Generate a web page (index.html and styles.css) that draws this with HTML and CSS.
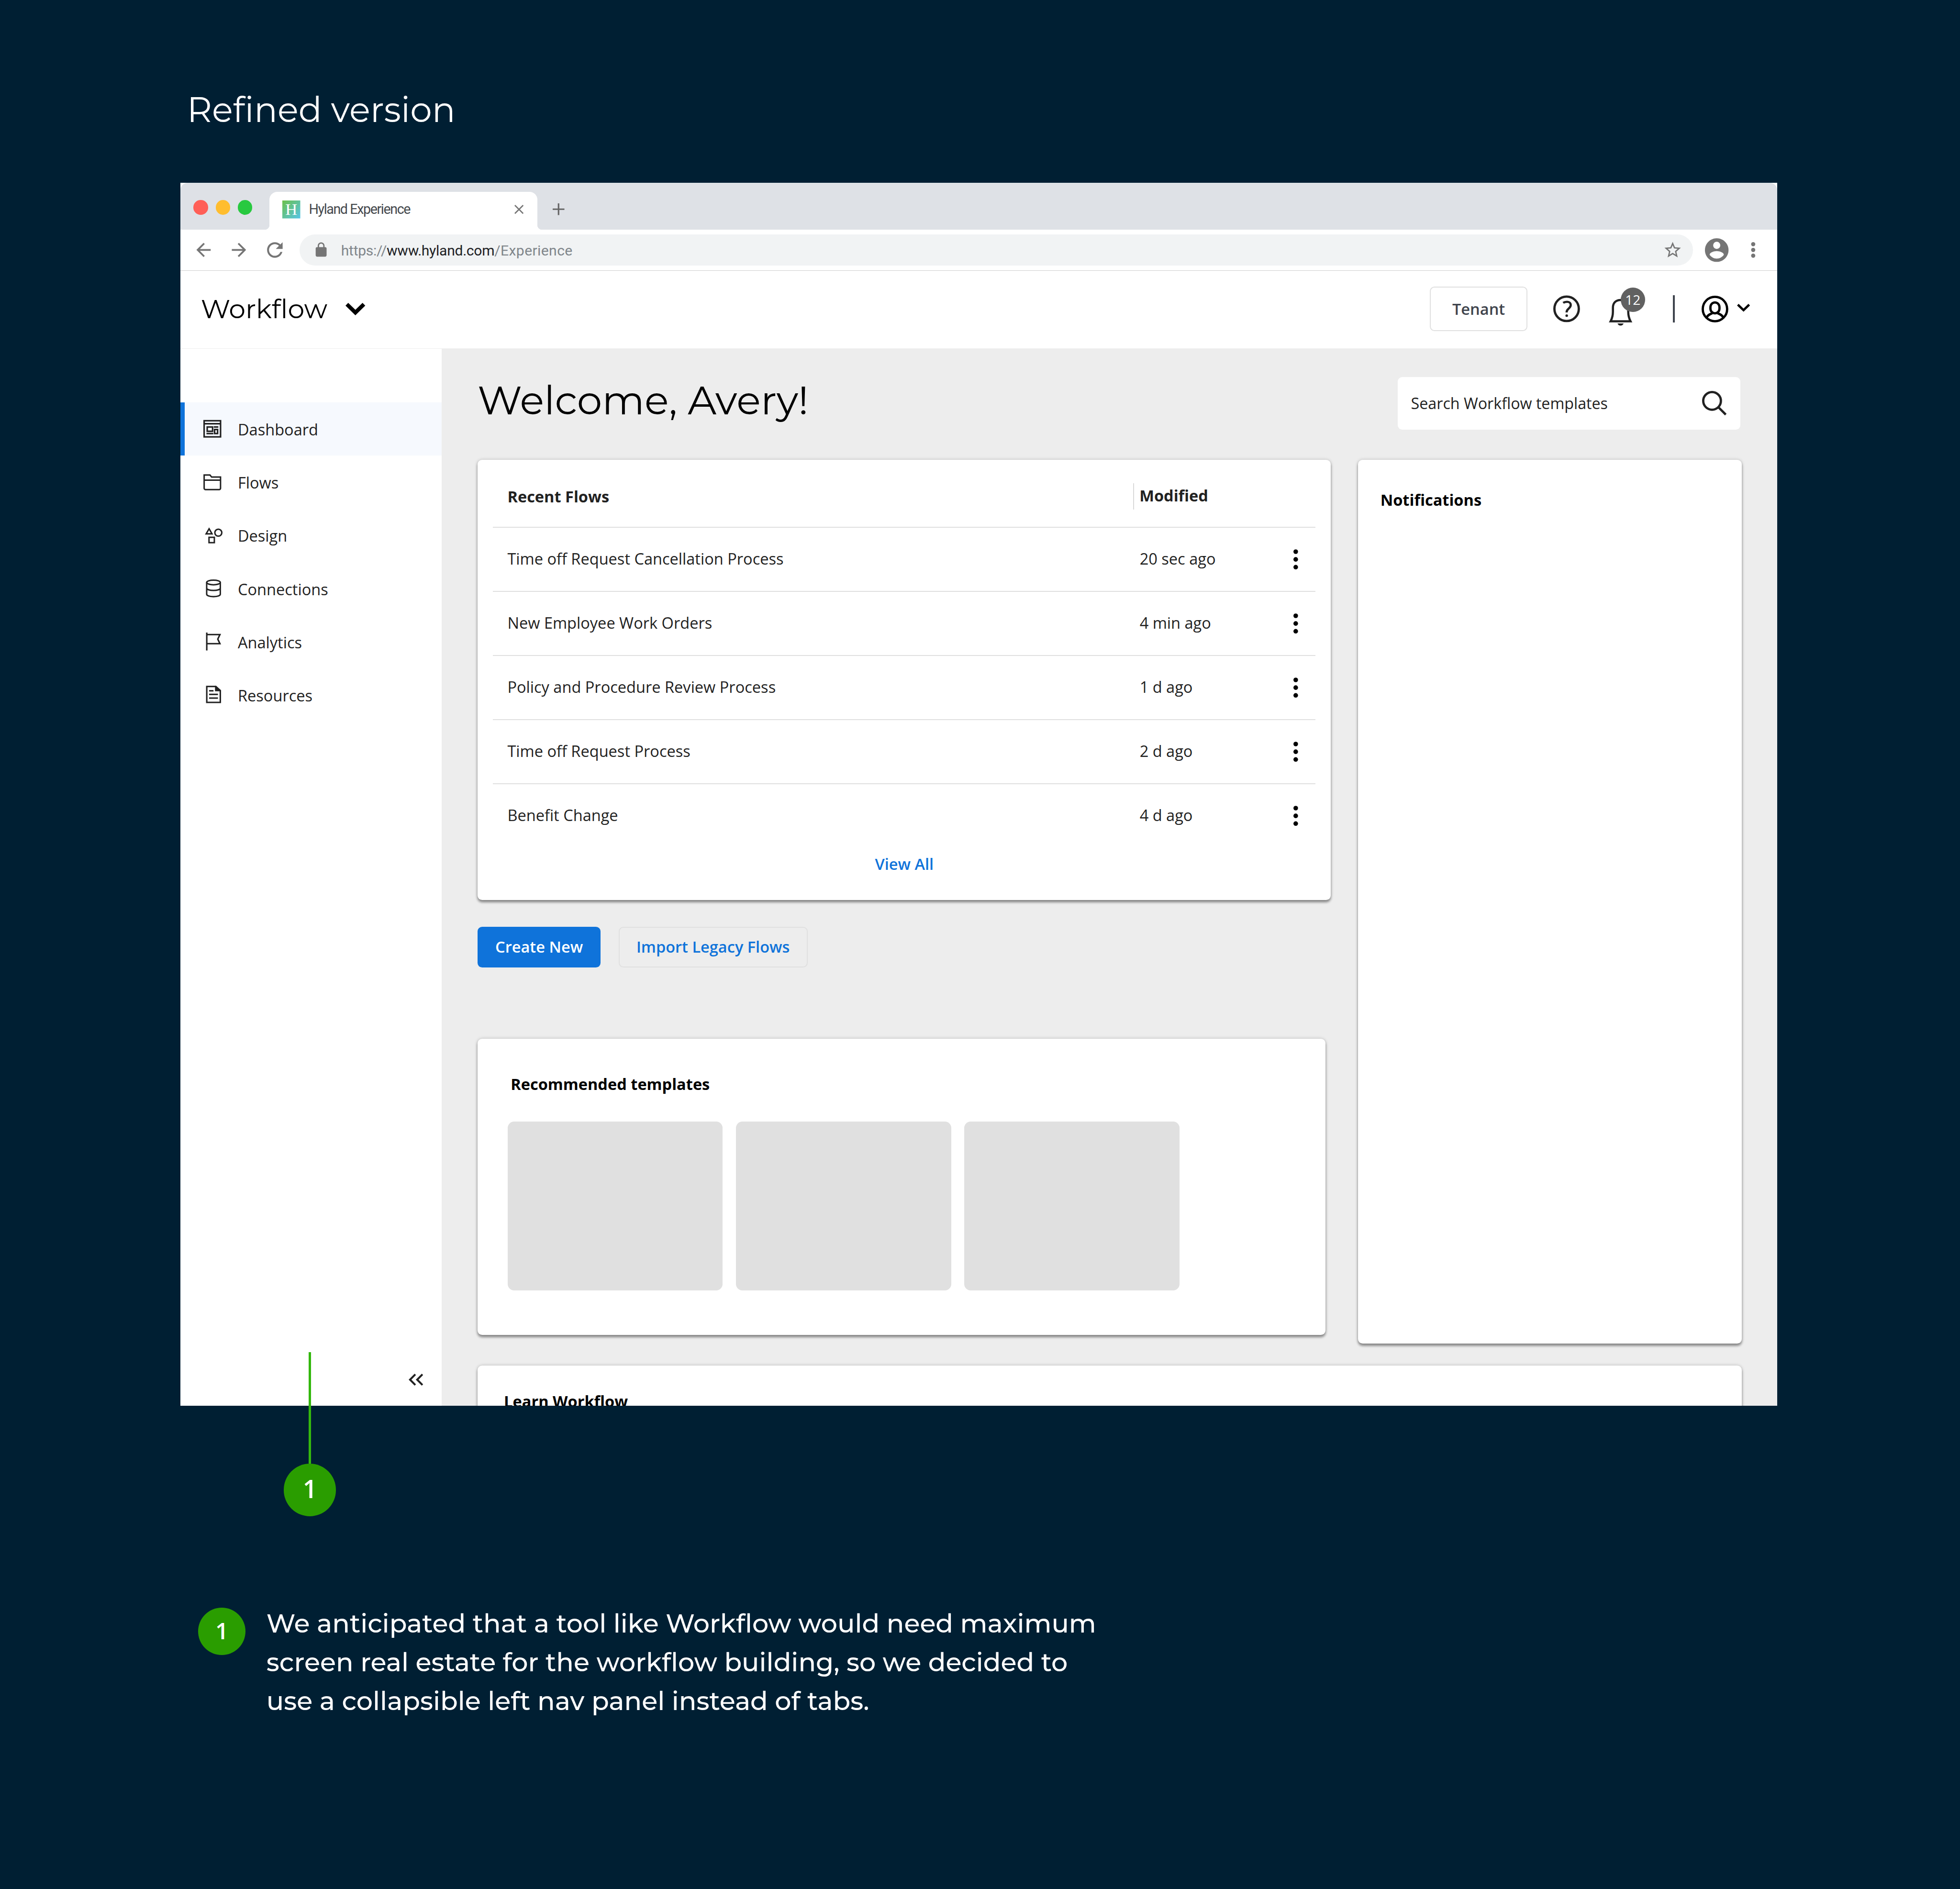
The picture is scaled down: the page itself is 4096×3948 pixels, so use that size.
FILE: index.html
```html
<!DOCTYPE html>
<html lang="en">
<head>
<meta charset="utf-8">
<title>Workflow – refined version</title>
<link rel="stylesheet" href="styles.css">
</head>
<body>
<h1 class="page-title">Refined version</h1>

<div class="stage">
  <section class="browser">
    <div class="tabstrip">
      <div class="lights"><i class="red"></i><i class="amber"></i><i class="green"></i></div>
      <div class="tab">
        <svg class="favicon" viewBox="0 0 39 39"><defs><linearGradient id="fav" x1="0" y1="0" x2="1" y2="1"><stop offset="0" stop-color="#6cc04a"/><stop offset="1" stop-color="#55c5e8"/></linearGradient></defs><rect width="39" height="39" fill="url(#fav)"/><text x="19.5" y="31.6" class="favicon-letter">H</text></svg>
        <span class="tab-title">Hyland Experience</span>
        <svg class="tab-close" viewBox="0 0 20 20"><path d="M1 1 19 19M19 1 1 19" fill="none" stroke="#757575" stroke-width="2.7"/></svg>
      </div>
      <svg class="tab-new" viewBox="0 0 26 26"><path d="M13 0V26M0 13H26" fill="none" stroke="#666" stroke-width="3.4"/></svg>
    </div>

    <div class="toolbar">
      <svg class="nav-arrow" viewBox="0 0 24 24"><path d="M20 11H7.83l5.59-5.59L12 4l-8 8 8 8 1.41-1.41L7.83 13H20v-2z"/></svg>
      <svg class="nav-arrow forward" viewBox="0 0 24 24"><path d="M12 4l-1.41 1.41L16.17 11H4v2h12.17l-5.58 5.59L12 20l8-8z"/></svg>
      <svg class="nav-reload" viewBox="0 0 24 24"><path d="M17.65 6.35C16.2 4.9 14.21 4 12 4c-4.42 0-7.99 3.58-7.99 8s3.57 8 7.99 8c3.73 0 6.84-2.55 7.73-6h-2.08c-.82 2.33-3.04 4-5.65 4-3.31 0-6-2.69-6-6s2.69-6 6-6c1.66 0 3.14.69 4.22 1.78L13 11h7V4l-2.35 2.35z"/></svg>
      <div class="address">
        <svg class="lock" viewBox="0 0 24 24"><path d="M18 8h-1V6c0-2.76-2.24-5-5-5S7 3.240 7 6v2H6c-1.100 0-2 .9-2 2v10c0 1.100.9 2 2 2h12c1.100 0 2-.9 2-2V10c0-1.100-.9-2-2-2zM8.900 6c0-1.710 1.390-3.100 3.100-3.100s3.100 1.390 3.100 3.100v2H8.900V6z"/></svg>
        <span class="url">https://<b>www.hyland.com</b><span class="url-path">/Experience</span></span>
        <svg class="star" viewBox="0 0 24 24"><path d="M22 9.240l-7.190-.62L12 2 9.190 8.630 2 9.240l5.460 4.730L5.820 21 12 17.270 18.180 21l-1.630-7.030L22 9.240zM12 15.400l-3.760 2.270 1-4.280-3.320-2.880 4.380-.38L12 6.100l1.710 4.040 4.380.38-3.320 2.880 1 4.280L12 15.400z"/></svg>
      </div>
      <svg class="profile" viewBox="0 0 24 24"><path d="M12 2C6.480 2 2 6.480 2 12s4.480 10 10 10 10-4.480 10-10S17.520 2 12 2zm0 3c1.660 0 3 1.340 3 3s-1.340 3-3 3-3-1.340-3-3 1.340-3 3-3zm0 14.200c-2.500 0-4.710-1.280-6-3.220.03-1.990 4-3.080 6-3.080 1.990 0 5.970 1.090 6 3.080-1.290 1.940-3.500 3.220-6 3.220z"/></svg>
      <svg class="browser-menu" viewBox="0 0 10 34"><circle cx="5" cy="4.500" r="4.500"/><circle cx="5" cy="17" r="4.500"/><circle cx="5" cy="29.500" r="4.500"/></svg>
    </div>

    <header class="app-header">
      <span class="app-name">Workflow</span>
      <svg class="app-switch" viewBox="0 0 43 27"><path d="M3 3 21.500 21 40 3" fill="none" stroke="#000" stroke-width="8.500"/></svg>
      <button class="tenant">Tenant</button>
      <svg class="help" viewBox="0 0 58 58"><circle cx="29" cy="28.500" r="26.500" fill="none" stroke="#212121" stroke-width="5"/><path d="M21.500 15.500C24.500 13.500 27.500 13.200 30 13.200C35 13.200 38 16.300 38 20C38 23.500 36.500 25.200 33.500 28C30.500 30.700 29 32.200 29 36.500" fill="none" stroke="#212121" stroke-width="4.800"/><circle cx="29.200" cy="43.300" r="2.800" fill="#212121"/></svg>
      <div class="bell">
        <svg viewBox="0 0 51.300 60"><path d="M4 56.700H47.300C44.300 51 42.300 45 42.300 36V27C42.300 16.500 35.500 10.300 25.600 10.300S9 16.500 9 27V36C9 45 7 51 4 56.700Z" fill="none" stroke="#212121" stroke-width="4.700"/><path d="M19 61.300H32.200C31 64.500 28.500 66.100 25.600 66.100S20.200 64.500 19 61.300Z" fill="#212121"/></svg>
        <span class="badge">12</span>
      </div>
      <i class="divider"></i>
      <svg class="user" viewBox="0 0 58 58"><g fill="none" stroke="#000" stroke-width="5"><circle cx="29" cy="29" r="26.500"/><rect x="19.200" y="14.600" width="19.600" height="23.700" rx="9.800" ry="10.300"/><path d="M10.800 48.500C12 43 17.500 40.500 22.800 38.300C24 37.800 24.200 37 24.300 36"/><path d="M47.200 48.500C46 43 40.500 40.500 35.200 38.300C34 37.800 33.800 37 33.700 36"/></g></svg>
      <svg class="user-chevron" viewBox="0 0 28.300 23"><path d="M1.800 1.900 14.150 13.700 26.500 1.900" fill="none" stroke="#000" stroke-width="5"/></svg>
    </header>

    <div class="app-body">
      <nav class="sidebar">
        <a class="nav-item active"><svg viewBox="0 0 42 40"><g fill="none" stroke="#212121" stroke-width="3.300"><rect x="1.650" y="2.400" width="35.700" height="35.100"/><path d="M1.650 8.900H37.300M6.700 30.300H21.700M22.700 16H32.500"/><rect x="8.350" y="16" width="11.700" height="9.300"/><rect x="24.400" y="21.400" width="6.500" height="8.900"/></g></svg><span>Dashboard</span></a>
        <a class="nav-item"><svg viewBox="0 0 42 40"><path d="M1.700 3.900H14.300L18 8.400H37.300V32.700a3 3 0 0 1-3 3H4.700a3 3 0 0 1-3-3ZM1.700 15H37.300" fill="none" stroke="#212121" stroke-width="3.100"/></svg><span>Flows</span></a>
        <a class="nav-item"><svg viewBox="0 0 42 40"><g fill="none" stroke="#212121" stroke-width="3.100"><path d="M12.400 5.300 18.800 16.300H6Z"/><circle cx="32.500" cy="13.800" r="7.600"/><rect x="12.250" y="23.900" width="11.600" height="11.600"/></g></svg><span>Design</span></a>
        <a class="nav-item"><svg viewBox="0 0 42 40"><g fill="none" stroke="#212121" stroke-width="3.100"><ellipse cx="22" cy="6.600" rx="14.800" ry="5"/><path d="M7.200 6.600V32.300C7.200 35.500 14 37.400 22 37.400S36.800 35.500 36.800 32.300V6.600M7.200 19C7.200 22 14 23.900 22 23.900S36.800 22 36.800 19"/></g></svg><span>Connections</span></a>
        <a class="nav-item"><svg viewBox="0 0 42 40"><path d="M7.400 0V39M7.400 4.400H36L31.300 14.300 36 24.200H7.400" fill="none" stroke="#212121" stroke-width="3.200"/></svg><span>Analytics</span></a>
        <a class="nav-item"><svg viewBox="0 0 42 40"><path d="M7.400 1.900H27L36.800 10.500V36.400H7.400ZM12.400 11.200H22M12.400 18.900H31.700M12.400 27H31.700" fill="none" stroke="#212121" stroke-width="3.200"/><path d="M25.300.5H28L38 10.500V12.200H25.300Z" fill="#212121"/></svg><span>Resources</span></a>
        <svg class="collapse" viewBox="0 0 32 26"><path d="M14.500 1.500 3 13 14.500 24.500M30 1.500 18.500 13 30 24.500" fill="none" stroke="#212121" stroke-width="4.200"/></svg>
      </nav>

      <main class="main">
        <div class="welcome-row">
          <h2 class="welcome">Welcome, Avery!</h2>
          <div class="search"><span>Search Workflow templates</span><svg viewBox="0 0 53 53"><circle cx="21.700" cy="21.700" r="19.200" fill="none" stroke="#212121" stroke-width="5"/><path d="M35.500 35.500 51.500 51.500" stroke="#212121" stroke-width="5"/></svg></div>
        </div>

        <div class="columns">
          <div class="left-column">
            <section class="card flows">
              <div class="flow-head"><strong>Recent Flows</strong><strong class="head-modified">Modified</strong></div>
              <div class="flow-row"><span>Time off Request Cancellation Process</span><span>20 sec ago</span><svg viewBox="0 0 10 44"><circle cx="5" cy="5.200" r="5"/><circle cx="5" cy="22" r="5"/><circle cx="5" cy="38.800" r="5"/></svg></div>
              <div class="flow-row"><span>New Employee Work Orders</span><span>4 min ago</span><svg viewBox="0 0 10 44"><circle cx="5" cy="5.200" r="5"/><circle cx="5" cy="22" r="5"/><circle cx="5" cy="38.800" r="5"/></svg></div>
              <div class="flow-row"><span>Policy and Procedure Review Process</span><span>1 d ago</span><svg viewBox="0 0 10 44"><circle cx="5" cy="5.200" r="5"/><circle cx="5" cy="22" r="5"/><circle cx="5" cy="38.800" r="5"/></svg></div>
              <div class="flow-row"><span>Time off Request Process</span><span>2 d ago</span><svg viewBox="0 0 10 44"><circle cx="5" cy="5.200" r="5"/><circle cx="5" cy="22" r="5"/><circle cx="5" cy="38.800" r="5"/></svg></div>
              <div class="flow-row"><span>Benefit Change</span><span>4 d ago</span><svg viewBox="0 0 10 44"><circle cx="5" cy="5.200" r="5"/><circle cx="5" cy="22" r="5"/><circle cx="5" cy="38.800" r="5"/></svg></div>
              <a class="view-all">View All</a>
            </section>
            <div class="actions"><button class="primary">Create New</button><button class="secondary">Import Legacy Flows</button></div>
            <section class="card templates">
              <h3>Recommended templates</h3>
              <div class="tiles"><i></i><i></i><i></i></div>
            </section>
          </div>
          <section class="card notifications"><h3>Notifications</h3></section>
        </div>
        <section class="card learn"><h3>Learn Workflow</h3></section>
      </main>
    </div>
  </section>

  <div class="pin"><i class="pin-line"></i><span class="marker">1</span></div>
</div>

<div class="note">
  <span class="marker small">1</span>
  <p>We anticipated that a tool like Workflow would need maximum<br>screen real estate for the workflow building, so we decided to<br>use a collapsible left nav panel instead of tabs.</p>
</div>
</body>
</html>
```
FILE: styles.css
```css
/* 1rem is 1/425.8 of the window width, so the board scales as a whole */
html { font-size: calc(100vw / 425.8); }
*, *::before, *::after { box-sizing: border-box; }
body {
  margin: 0;
  height: 100vh;
  overflow: hidden;
  padding: 18.78rem 0 0 39.2rem;
  background: #001f33;
  color: #212121;
  font: 400 3.385rem/5rem "Open Sans", "Noto Sans", sans-serif;
}
h1, h2, h3, p { margin: 0; }
svg { display: block; flex: none; overflow: visible; }
button { font: inherit; padding: 0; margin: 0; }

.page-title {
  margin-left: 1.42rem;
  font: 400 7.53rem/10rem Montserrat, Inter, sans-serif;
  color: #fff;
}
.stage { position: relative; width: 346.85rem; margin-top: 10.97rem; }

/* browser frame */
.browser {
  display: flex;
  flex-direction: column;
  height: 265.65rem;
  overflow: hidden;
  background: #fff;
}
.tabstrip {
  display: flex;
  align-items: flex-start;
  flex: none;
  height: 10.18rem;
  padding-left: 2.85rem;
  background: #dee1e6;
  border-radius: 1.6rem 1.6rem 0 0;
}
.lights { display: flex; gap: 1.64rem; margin-top: 3.73rem; width: 16.5rem; }
.lights i { width: 3.16rem; height: 3.16rem; border-radius: 50%; }
.red { background: #ff5f57; }
.amber { background: #ffbd2e; }
.green { background: #28c940; }
.tab {
  position: relative;
  display: flex;
  align-items: center;
  width: 58.15rem;
  height: 8.27rem;
  margin-top: 1.91rem;
  padding: 0 3rem .6rem 2.8rem;
  background: #fff;
  border-radius: 1.7rem 1.7rem 0 0;
}
.tab::before, .tab::after {
  content: "";
  position: absolute;
  bottom: 0;
  width: 1.2rem;
  height: 1.2rem;
}
.tab::before { right: 100%; background: radial-gradient(circle at 0 0, transparent 1.18rem, #fff 1.22rem); }
.tab::after { left: 100%; background: radial-gradient(circle at 100% 0, transparent 1.18rem, #fff 1.22rem); }
.favicon { width: 3.9rem; height: 3.9rem; }
.favicon-letter { font: 36px "Liberation Serif", serif; fill: #fff; text-anchor: middle; }
.tab-title {
  margin-left: 1.85rem;
  font: 400 2.98rem/4rem Roboto, sans-serif;
  letter-spacing: -.145rem;
  color: #45494d;
}
.tab-close { width: 2rem; height: 2rem; margin-left: auto; }
.tab-new { width: 2.55rem; height: 2.55rem; margin: 4.48rem 0 0 3.37rem; }

.toolbar {
  display: flex;
  align-items: center;
  flex: none;
  height: 8.88rem;
  padding: 0 4.7rem 0 2.72rem;
  border-bottom: .16rem solid #cfcfcf;
  fill: #757575;
}
.nav-arrow { width: 4.65rem; height: 4.65rem; }
.forward { margin-left: 3.05rem; }
.nav-reload { width: 5.07rem; height: 5.07rem; margin-left: 2.9rem; }
.address {
  display: flex;
  align-items: center;
  flex: 1;
  height: 6.74rem;
  margin: 0 2rem 0 2.87rem;
  padding: 0 2.3rem 0 2.92rem;
  background: #f1f3f4;
  border-radius: 3.37rem;
}
.lock { width: 3.56rem; height: 3.56rem; }
.url {
  margin-left: 2.52rem;
  padding-top: .3rem;
  font: 400 3.13rem/4rem Roboto, sans-serif;
  letter-spacing: -.03rem;
  color: #80868b;
}
.url b { font-weight: 400; color: #202124; }
.url-path { letter-spacing: .04rem; }
.star { width: 4.27rem; height: 4.27rem; margin-left: auto; }
.profile { width: 6.16rem; height: 6.16rem; }
.browser-menu { width: 1rem; height: 3.4rem; margin-left: 4.35rem; }

/* application header */
.app-header {
  display: flex;
  align-items: center;
  flex: none;
  height: 17.01rem;
  padding: 0 5.85rem .3rem 4.43rem;
  border-bottom: .15rem solid #efefef;
}
.app-name { font: 400 5.76rem/7rem Montserrat, Inter, sans-serif; color: #000; }
.app-switch { width: 4.3rem; height: 2.7rem; margin-left: 3.95rem; }
.tenant {
  width: 21.12rem;
  height: 9.6rem;
  margin-left: auto;
  background: #fff;
  border: .26rem solid #e0e0e0;
  border-radius: 1rem;
  font-weight: 600;
  color: #3f444d;
}
.help { width: 5.8rem; height: 5.8rem; margin-left: 5.7rem; }
.bell { position: relative; width: 5.13rem; height: 6rem; margin-left: 6.2rem; }
.bell svg { width: 100%; height: 100%; }
.badge {
  position: absolute;
  left: 2.6rem;
  top: -1.6rem;
  width: 5.3rem;
  height: 5.3rem;
  border-radius: 50%;
  background: #616161;
  color: #fff;
  font-size: 2.92rem;
  line-height: 5.3rem;
  text-align: center;
}
.divider { width: .49rem; height: 6rem; margin-left: 8.78rem; background: #3f444d; }
.user { width: 5.8rem; height: 5.8rem; margin-left: 5.74rem; }
.user-chevron { width: 2.83rem; height: 2.3rem; margin-left: 1.95rem; }

/* side navigation */
.app-body { display: flex; flex: 1; min-height: 0; }
.sidebar {
  display: flex;
  flex-direction: column;
  flex: none;
  width: 56.8rem;
  padding: 11.62rem 0 4.33rem;
}
.nav-item {
  display: flex;
  align-items: center;
  gap: 3.3rem;
  height: 11.56rem;
  padding-left: 4.03rem;
  border-left: 1rem solid transparent;
}
.nav-item span { padding-top: .3rem; }
.nav-item svg { width: 4.2rem; height: 4rem; }
.active { background: #f6f9fe; border-left-color: #0f73da; }
.collapse { width: 3.2rem; height: 2.6rem; margin: auto 4.05rem 0 auto; }

/* dashboard */
.main {
  display: flex;
  flex-direction: column;
  flex: 1;
  padding: 6.08rem 7.68rem 0 7.76rem;
  background: #ededed;
}
.main > * { flex: none; }
.welcome-row { display: flex; justify-content: space-between; height: 18.05rem; }
.welcome { font: 400 8.7rem/10rem Montserrat, Inter, sans-serif; color: #000; }
.search {
  display: flex;
  align-items: center;
  justify-content: space-between;
  width: 74.4rem;
  height: 11.45rem;
  margin-right: .3rem;
  padding: 0 3.05rem 0 2.85rem;
  background: #fff;
  border-radius: 1rem;
  font-size: 3.35rem;
}
.search span { padding-top: .1rem; }
.search svg { width: 5.3rem; height: 5.3rem; }
.card {
  background: #fff;
  border-radius: 1rem;
  box-shadow: 0 .45rem .6rem rgba(0, 0, 0, .36), 0 .1rem .8rem rgba(0, 0, 0, .2);
}
.card h3 { font-size: inherit; line-height: 5rem; font-weight: 700; color: #000; }
.columns { display: flex; justify-content: space-between; align-items: flex-start; }
.left-column { width: 185.39rem; }

.flows { height: 95.62rem; padding: 1.36rem 3.33rem 0; text-align: center; }
.flow-head, .flow-row {
  display: grid;
  grid-template-columns: 135.9rem 1fr 1rem;
  align-items: center;
  height: 13.93rem;
  padding: 0 3.8rem 0 3.15rem;
  border-bottom: .26rem solid #e0e0e0;
  text-align: left;
}
.flow-head { height: 13.35rem; }
.flow-row:nth-of-type(6) { border-color: transparent; }
.flow-row span { padding: 0 0 .2rem 0; }
.flow-row span + span { padding-left: 1.45rem; }
.head-modified { padding: .2rem 0 .5rem 1.2rem; border-left: .25rem solid #dadada; }
.flow-row svg { width: 1rem; height: 4.4rem; }
.view-all { display: block; margin-top: .9rem; font-weight: 600; color: #0f73da; }

.actions { display: flex; gap: 3.92rem; margin: 5.76rem 0 15.47rem; }
.actions button {
  height: 8.87rem;
  border-radius: 1rem;
  font-weight: 600;
}
.primary { width: 26.72rem; border: 0; background: #0f73da; color: #fff; }
.secondary { width: 41.03rem; border: .26rem solid #e0e0e0; background: none; color: #0f73da; }

.templates { width: 184.19rem; height: 64.4rem; padding: 7.37rem 6.51rem 0; }
.templates h3 { margin-left: .68rem; }
.tiles { display: flex; gap: 2.86rem; margin-top: 5.68rem; }
.tiles i { width: 46.75rem; height: 36.65rem; border-radius: 1.4rem; background: #e0e0e0; }

.notifications { width: 83.37rem; height: 192rem; padding: 6.18rem 4.88rem; }
.learn { height: 30rem; margin-top: 4.71rem; padding: 5.3rem 5.72rem; }

/* annotations */
.pin {
  position: absolute;
  left: 22.42rem;
  top: 254.05rem;
  display: flex;
  flex-direction: column;
  align-items: center;
}
.pin-line { width: .52rem; height: 24.25rem; background: #34b80e; }
.marker {
  flex: none;
  width: 11.4rem;
  height: 11.4rem;
  border-radius: 50%;
  background: #2a9d00;
  color: #fff;
  font-size: 5.4rem;
  font-weight: 600;
  line-height: 10.8rem;
  text-align: center;
}
.small { width: 10.3rem; height: 10.3rem; margin-top: .64rem; font-size: 4.95rem; line-height: 9.9rem; }
.note { display: flex; gap: 4.54rem; margin: 43.21rem 0 0 3.85rem; }
.note p { font: 500 5.6rem/8.42rem Montserrat, Inter, sans-serif; color: #fff; }
```
